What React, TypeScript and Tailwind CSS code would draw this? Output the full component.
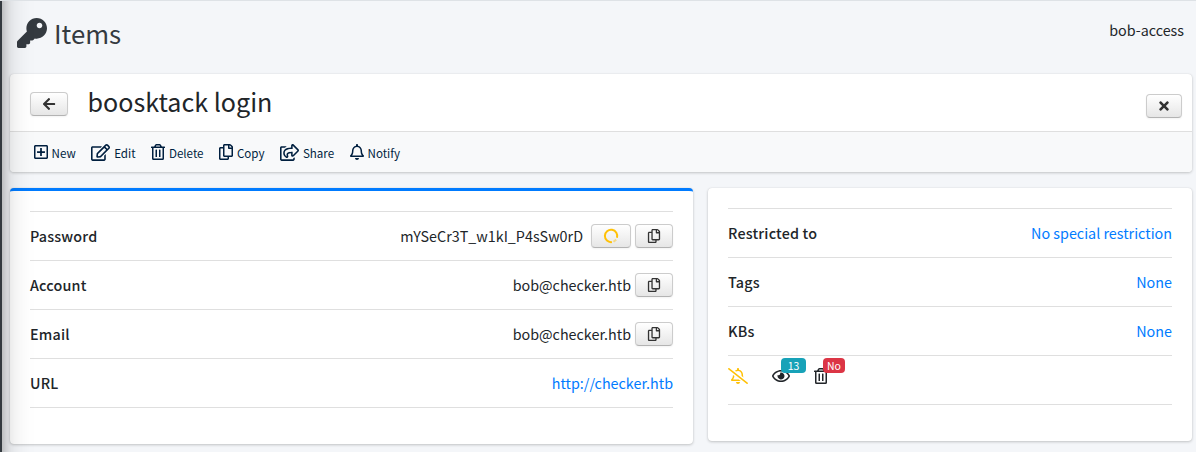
import type { ReactNode } from 'react';
import {
  FaKey,
  FaArrowLeft,
  FaTimes,
  FaRegPlusSquare,
  FaRegEdit,
  FaRegTrashAlt,
  FaRegCopy,
  FaRegShareSquare,
  FaRegBell,
  FaRegBellSlash,
  FaRegEye,
} from 'react-icons/fa';

const actions = [
  { label: 'New', Icon: FaRegPlusSquare, size: 'h-[16px] w-[14px]' },
  { label: 'Edit', Icon: FaRegEdit, size: 'h-[17px] w-[19px]' },
  { label: 'Delete', Icon: FaRegTrashAlt, size: 'h-[16px] w-[14px]' },
  { label: 'Copy', Icon: FaRegCopy, size: 'h-[16px] w-[14px]' },
  { label: 'Share', Icon: FaRegShareSquare, size: 'h-[17px] w-[19px]' },
  { label: 'Notify', Icon: FaRegBell, size: 'h-[16px] w-[14px]' },
];

function Button({ children, className = '' }: { children: ReactNode; className?: string }) {
  return (
    <button
      className={`flex h-[24px] items-center justify-center rounded-[4px] border border-[#ccc] border-b-[#b3b3b3] bg-linear-to-b from-white to-[#e6e6e6] text-[#333] shadow-[0_1px_2px_rgba(0,0,0,0.05)] ${className}`}
    >
      {children}
    </button>
  );
}

function CopyButton() {
  return (
    <Button className="w-[38px]">
      <FaRegCopy className="size-[14px]" />
    </Button>
  );
}

function Row({ label, children }: { label: string; children: ReactNode }) {
  return (
    <li className="flex h-[49px] items-center justify-between border-b border-[#dfdfdf]">
      <span className="pb-px font-medium tracking-[0.18px] text-[#212529]">{label}</span>
      <div className="flex items-center gap-[4px]">{children}</div>
    </li>
  );
}

export default function App() {
  return (
    <div className="relative h-[452px] w-full overflow-hidden border-t border-[#dee2e6] bg-[#f4f6f9] pl-[10px] pr-[4px] text-[14.33px] leading-6 text-[#212529] [font-family:'Source_Sans_Pro','Noto_Sans_CJK_SC',sans-serif]">
      <aside className="absolute -top-16 -bottom-16 -left-[248px] z-10 w-[250px] bg-[#343a40] shadow-[0_14px_28px_rgba(0,0,0,0.25),0_10px_10px_rgba(0,0,0,0.22)]" />

      <header className="flex h-[73px] items-start justify-between pl-[7px] pr-[8px]">
        <h1 className="flex items-center gap-[7px] pt-[14px] text-[25.8px] leading-[35px] text-[#343a40]">
          <FaKey className="size-[30px]" />
          <span className="pb-px">Items</span>
        </h1>
        <span className="pt-[17px]">bob-access</span>
      </header>

      <section className="h-[98px] overflow-hidden rounded-[4px] bg-white shadow-[0_0_1px_rgba(0,0,0,0.125),0_1px_3px_rgba(0,0,0,0.2)]">
        <div className="flex h-[58px] items-center border-b border-[#dfdfdf] pl-[20px] pr-[10px]">
          <Button className="mt-[3px] w-[38px]">
            <FaArrowLeft className="size-[14px]" />
          </Button>
          <h2 className="ml-[19.5px] flex-1 pb-[4px] text-[25.1px] leading-[34px]">boosktack login</h2>
          <Button className="mt-[7px] w-[36px]">
            <FaTimes className="size-[14px]" />
          </Button>
        </div>
        <div className="flex h-[40px] items-center gap-[15.5px] bg-[#f8f9fa] pl-[23.6px] text-[11.6px] tracking-[-0.03px] text-[#001f3f]">
          {actions.map(({ label, Icon, size }) => (
            <span key={label} className="flex items-center gap-[4px]">
              <Icon className={size} />
              <span className="pt-px">{label}</span>
            </span>
          ))}
        </div>
      </section>

      <div className="mt-[16px] flex items-start gap-[15px]">
        <section className="h-[256px] w-[683px] rounded-[4px] border-t-[3px] border-[#007bff] bg-white px-[20px] pt-[20px] shadow-[0_0_1px_rgba(0,0,0,0.125),0_1px_3px_rgba(0,0,0,0.2)]">
          <ul className="border-t border-[#dfdfdf]">
            <Row label="Password">
              <span className="mr-[4px]">mYSeCr3T_w1kI_P4sSw0rD</span>
              <Button className="w-[40px]">
                <svg viewBox="0 0 16 16" className="size-[16px]" fill="none" stroke="#ffc107" strokeWidth="2">
                  <path d="M8.9 14.1A6.2 6.2 0 1 1 14 9.8" />
                  <path d="M10.5 13.8 13.2 11.6" strokeOpacity=".45" />
                </svg>
              </Button>
              <CopyButton />
            </Row>
            <Row label="Account">
              <span>bob@checker.htb</span>
              <CopyButton />
            </Row>
            <Row label="Email">
              <span>bob@checker.htb</span>
              <CopyButton />
            </Row>
            <Row label="URL">
              <a className="text-[#007bff]">http://checker.htb</a>
            </Row>
          </ul>
        </section>

        <section className="h-[253px] flex-1 rounded-[4px] bg-white px-[20px] pt-[20px] shadow-[0_0_1px_rgba(0,0,0,0.125),0_1px_3px_rgba(0,0,0,0.2)]">
          <ul className="border-t border-[#dfdfdf]">
            <Row label="Restricted to">
              <a className="text-[#007bff]">No special restriction</a>
            </Row>
            <Row label="Tags">
              <a className="text-[#007bff]">None</a>
            </Row>
            <Row label="KBs">
              <a className="text-[#007bff]">None</a>
            </Row>
            <li className="flex h-[49px] items-start border-b border-[#dfdfdf] pt-[12px]">
              <FaRegBellSlash className="h-[16px] w-[20px] text-[#ffc107]" />
              <span className="relative ml-[24px]">
                <FaRegEye className="h-[16px] w-[18px]" />
                <span className="absolute -top-[10px] left-[9px] flex h-[15px] w-[25px] items-center justify-center rounded-[4px] bg-[#17a2b8] pt-px text-[10.5px] leading-none text-white">
                  13
                </span>
              </span>
              <span className="relative ml-[24px]">
                <FaRegTrashAlt className="h-[16px] w-[14px]" />
                <span className="absolute -top-[10px] left-[9px] flex h-[15px] w-[22px] items-center justify-center rounded-[4px] bg-[#dc3545] pt-px text-[10.5px] leading-none text-white">
                  No
                </span>
              </span>
            </li>
          </ul>
        </section>
      </div>
    </div>
  );
}
